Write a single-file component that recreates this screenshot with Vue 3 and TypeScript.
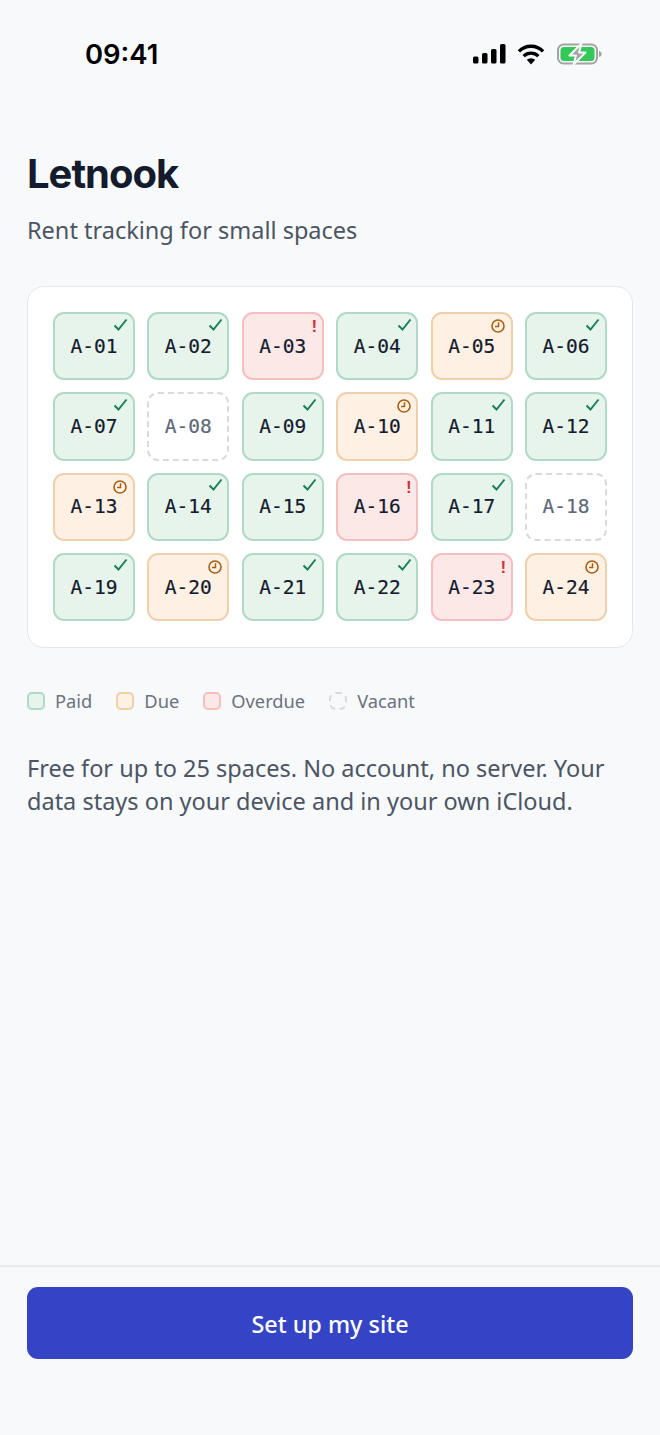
<script setup lang="ts">
type Status = 'paid' | 'due' | 'overdue' | 'vacant'
const codes: Status[] = [
  'paid','paid','overdue','paid','due','paid',
  'paid','vacant','paid','due','paid','paid',
  'due','paid','paid','overdue','paid','vacant',
  'paid','due','paid','paid','overdue','due',
]
const cells = codes.map((status, i) => ({
  status,
  label: 'A-' + String(i + 1).padStart(2, '0'),
}))
const legend: { status: Status; label: string }[] = [
  { status: 'paid', label: 'Paid' },
  { status: 'due', label: 'Due' },
  { status: 'overdue', label: 'Overdue' },
  { status: 'vacant', label: 'Vacant' },
]
</script>

<template>
  <div class="screen">
    <div class="statusbar">
      <span class="time">09:41</span>
      <div class="status-icons">
        <svg width="34" height="20" viewBox="0 0 34 20" class="signal">
          <rect x="0" y="12.5" width="5.5" height="7" rx="1.6" fill="#000" />
          <rect x="9" y="9" width="5.5" height="10.5" rx="1.6" fill="#000" />
          <rect x="18" y="5" width="5.5" height="14.5" rx="1.6" fill="#000" />
          <rect x="27" y="0" width="5.5" height="19.5" rx="1.6" fill="#000" />
        </svg>
        <svg width="28" height="21" viewBox="0 0 26 20" class="wifi">
          <path d="M1.5 7 A16 16 0 0 1 24.5 7" fill="none" stroke="#000" stroke-width="3.2" />
          <path d="M6 11.5 A10 10 0 0 1 20 11.5" fill="none" stroke="#000" stroke-width="3.2" />
          <path d="M9 15 L13 19.5 L17 15 A6 6 0 0 0 9 15 Z" fill="#000" />
        </svg>
        <svg width="46" height="22" viewBox="0 0 46 22" class="battery">
          <rect x="1" y="1.5" width="39" height="19" rx="5.5" fill="none" stroke="#a3a3a3" stroke-width="2" />
          <rect x="3.5" y="4" width="34" height="14" rx="3.5" fill="#34c759" />
          <path d="M42 8 C44 8.5 44.6 9.5 44.6 11 C44.6 12.5 44 13.5 42 14 Z" fill="#a3a3a3" />
          <path d="M24.5 0.5 L12.5 12.5 H19 L16.5 21.5 L28.5 9.5 H22 Z" fill="#a3a3a3" stroke="#f8f9fb" stroke-width="2" stroke-linejoin="round" />
        </svg>
      </div>
    </div>

    <main class="content">
      <h1 class="title">Letnook</h1>
      <p class="subtitle">Rent tracking for small spaces</p>

      <section class="card">
        <div class="grid">
          <div v-for="cell in cells" :key="cell.label" class="cell" :class="cell.status">
            <span class="code">{{ cell.label }}</span>
            <svg v-if="cell.status === 'paid'" class="mark" width="15" height="14" viewBox="0 0 15 14">
              <path d="M1.5 7.5 L5.5 11.5 L13.5 1.5" fill="none" stroke="#1a7f5a" stroke-width="2" />
            </svg>
            <svg v-else-if="cell.status === 'due'" class="mark" width="16" height="16" viewBox="0 0 16 16">
              <circle cx="8" cy="8" r="6" fill="none" stroke="#a85f14" stroke-width="1.6" />
              <path d="M8.5 4.2 V8.4 H5" fill="none" stroke="#a85f14" stroke-width="1.5" />
            </svg>
            <span v-else-if="cell.status === 'overdue'" class="bang">!</span>
          </div>
        </div>
      </section>

      <div class="legend">
        <div v-for="item in legend" :key="item.label" class="legend-item">
          <span class="swatch" :class="item.status"></span>
          <span>{{ item.label }}</span>
        </div>
      </div>

      <p class="note">Free for up to 25 spaces. No account, no server. Your data stays on your device and in your own iCloud.</p>
    </main>

    <footer class="footer">
      <button class="cta" type="button">Set up my site</button>
    </footer>
  </div>
</template>

<style scoped>
.screen {
  width: 660px;
  height: 1435px;
  background: #f8f9fb;
  display: flex;
  flex-direction: column;
  font-family: "Noto Sans", "Open Sans", sans-serif;
  overflow: hidden;
}
.statusbar {
  height: 108px;
  flex: none;
  box-sizing: border-box;
  padding: 38px 57px 0 85px;
  display: flex;
  justify-content: space-between;
  align-items: flex-start;
}
.time {
  font-family: "Inter", "Liberation Sans", sans-serif;
  font-size: 27.4px;
  line-height: 32px;
  font-weight: 600;
  color: #000;
}
.status-icons {
  display: flex;
  align-items: center;
  height: 32px;
}
.signal { margin-right: 10px; }
.wifi { margin-right: 12px; }
.content {
  flex: 1;
  padding: 41px 27px 0;
}
.title {
  margin: 0;
  font-family: "Inter", "Noto Sans", sans-serif;
  font-size: 40px;
  line-height: 50px;
  font-weight: 700;
  letter-spacing: -1px;
  color: #141b2d;
}
.subtitle {
  margin: 15px 0 0;
  font-size: 23.5px;
  line-height: 32px;
  color: #4b5563;
}
.card {
  margin-top: 40px;
  box-sizing: border-box;
  height: 362px;
  background: #fff;
  border: 1px solid #e5e7eb;
  border-radius: 17px;
  padding: 25px;
}
.grid {
  display: grid;
  grid-template-columns: repeat(6, 1fr);
  grid-auto-rows: 68.3px;
  gap: 12px 12.6px;
}
.cell {
  position: relative;
  box-sizing: border-box;
  border-radius: 11px;
  border: 2px solid;
  display: flex;
  align-items: center;
  justify-content: center;
}
.code {
  font-family: "DejaVu Sans Mono", "Liberation Mono", monospace;
  font-size: 19.5px;
  font-weight: 500;
  color: #141b2d;
  -webkit-text-stroke: 0.2px currentColor;
}
.mark {
  position: absolute;
  top: 3.5px;
  right: 4.5px;
}
.cell.due .mark {
  top: 4px;
  right: 4.5px;
}
.bang {
  position: absolute;
  top: 3px;
  right: 4.5px;
  font-family: "Liberation Sans", sans-serif;
  font-size: 17px;
  line-height: 20px;
  font-weight: 700;
  color: #c93636;
}
.legend {
  margin-top: 41px;
  display: flex;
  gap: 24px;
}
.legend-item {
  display: flex;
  align-items: center;
  gap: 10px;
  font-size: 18.3px;
  line-height: 24px;
  color: #6b7280;
}
.swatch {
  box-sizing: border-box;
  width: 18px;
  height: 18px;
  border-radius: 5px;
  border: 2px solid;
}
.paid { background: #e6f4ec; border-color: #b0d9c7; }
.due { background: #fef1e3; border-color: #eed0aa; }
.overdue { background: #fde8e8; border-color: #f4bfbf; }
.vacant { background: #fff; border: 2px dashed #d8dadf; }
.vacant .code { color: #5f6779; }
.swatch.vacant { background: transparent; border-radius: 7px; }
.note {
  margin: 39px 0 0;
  font-size: 23.5px;
  line-height: 33px;
  color: #4b5563;
}
.footer {
  flex: none;
  height: 170px;
  box-sizing: border-box;
  border-top: 2px solid #e8eaee;
  padding: 20px 27px 0;
}
.cta {
  display: block;
  width: 100%;
  height: 72px;
  border: none;
  border-radius: 11px;
  padding: 2px 0 0;
  background: #3444c4;
  color: #fff;
  font-family: "Noto Sans", sans-serif;
  font-size: 23.4px;
  font-weight: 500;
}
</style>
